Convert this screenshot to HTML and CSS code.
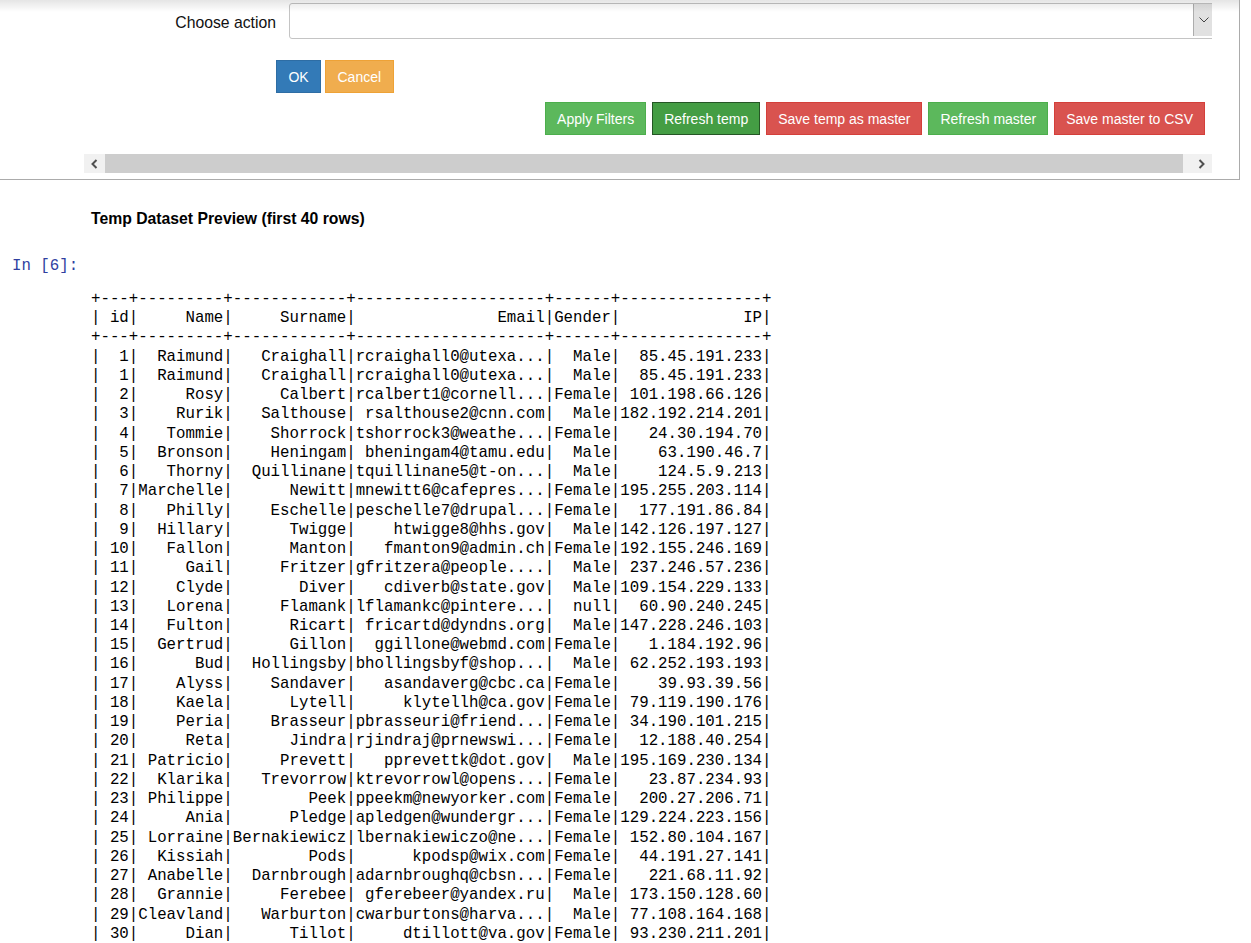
FILE: index.html
```html
<!DOCTYPE html>
<html>
<head>
<meta charset="utf-8">
<link rel="stylesheet" href="styles.css">
</head>
<body>
<div class="widget-box">
  <div class="top-shade"></div>
  <div class="clip">
    <div class="row-select">
      <label class="w-label">Choose action</label>
      <div class="select">
        <div class="select-arrow">
          <svg width="10" height="6" viewBox="0 0 10 6"><path d="M0.5 0.5 L5 5 L9.5 0.5" fill="none" stroke="#444" stroke-width="1"/></svg>
        </div>
      </div>
    </div>
    <div class="row-ok">
      <button class="btn btn-primary btn-ok">OK</button>
      <button class="btn btn-warning">Cancel</button>
    </div>
    <div class="row-actions">
      <button class="btn btn-success">Apply Filters</button>
      <button class="btn btn-success active">Refresh temp</button>
      <button class="btn btn-danger">Save temp as master</button>
      <button class="btn btn-success">Refresh master</button>
      <button class="btn btn-danger">Save master to CSV</button>
    </div>
    <div class="hscroll">
      <div class="hs-arrow hs-left">
        <svg width="7" height="10" viewBox="0 0 7 10"><path d="M5.5 1 L1.5 5 L5.5 9" fill="none" stroke="#505050" stroke-width="2"/></svg>
      </div>
      <div class="hs-thumb"></div>
      <div class="hs-track"></div>
      <div class="hs-arrow hs-right">
        <svg width="7" height="10" viewBox="0 0 7 10"><path d="M1.5 1 L5.5 5 L1.5 9" fill="none" stroke="#505050" stroke-width="2"/></svg>
      </div>
    </div>
  </div>
</div>

<h4 class="preview-title">Temp Dataset Preview (first 40 rows)</h4>

<div class="prompt">In [6]:</div>

<pre class="output">+---+---------+------------+--------------------+------+---------------+
| id|     Name|     Surname|               Email|Gender|             IP|
+---+---------+------------+--------------------+------+---------------+
|  1|  Raimund|   Craighall|rcraighall0@utexa...|  Male|  85.45.191.233|
|  1|  Raimund|   Craighall|rcraighall0@utexa...|  Male|  85.45.191.233|
|  2|     Rosy|     Calbert|rcalbert1@cornell...|Female| 101.198.66.126|
|  3|    Rurik|   Salthouse| rsalthouse2@cnn.com|  Male|182.192.214.201|
|  4|   Tommie|    Shorrock|tshorrock3@weathe...|Female|   24.30.194.70|
|  5|  Bronson|    Heningam| bheningam4@tamu.edu|  Male|    63.190.46.7|
|  6|   Thorny|  Quillinane|tquillinane5@t-on...|  Male|    124.5.9.213|
|  7|Marchelle|      Newitt|mnewitt6@cafepres...|Female|195.255.203.114|
|  8|   Philly|    Eschelle|peschelle7@drupal...|Female|  177.191.86.84|
|  9|  Hillary|      Twigge|    htwigge8@hhs.gov|  Male|142.126.197.127|
| 10|   Fallon|      Manton|   fmanton9@admin.ch|Female|192.155.246.169|
| 11|     Gail|     Fritzer|gfritzera@people....|  Male| 237.246.57.236|
| 12|    Clyde|       Diver|   cdiverb@state.gov|  Male|109.154.229.133|
| 13|   Lorena|     Flamank|lflamankc@pintere...|  null|  60.90.240.245|
| 14|   Fulton|      Ricart| fricartd@dyndns.org|  Male|147.228.246.103|
| 15|  Gertrud|      Gillon|  ggillone@webmd.com|Female|   1.184.192.96|
| 16|      Bud|  Hollingsby|bhollingsbyf@shop...|  Male| 62.252.193.193|
| 17|    Alyss|    Sandaver|   asandaverg@cbc.ca|Female|    39.93.39.56|
| 18|    Kaela|      Lytell|     klytellh@ca.gov|Female| 79.119.190.176|
| 19|    Peria|    Brasseur|pbrasseuri@friend...|Female| 34.190.101.215|
| 20|     Reta|      Jindra|rjindraj@prnewswi...|Female|  12.188.40.254|
| 21| Patricio|     Prevett|   pprevettk@dot.gov|  Male|195.169.230.134|
| 22|  Klarika|   Trevorrow|ktrevorrowl@opens...|Female|   23.87.234.93|
| 23| Philippe|        Peek|ppeekm@newyorker.com|Female|  200.27.206.71|
| 24|     Ania|      Pledge|apledgen@wundergr...|Female|129.224.223.156|
| 25| Lorraine|Bernakiewicz|lbernakiewiczo@ne...|Female| 152.80.104.167|
| 26|  Kissiah|        Pods|      kpodsp@wix.com|Female|  44.191.27.141|
| 27| Anabelle|  Darnbrough|adarnbroughq@cbsn...|Female|   221.68.11.92|
| 28|  Grannie|     Ferebee| gferebeer@yandex.ru|  Male| 173.150.128.60|
| 29|Cleavland|   Warburton|cwarburtons@harva...|  Male| 77.108.164.168|
| 30|     Dian|      Tillot|     dtillott@va.gov|Female| 93.230.211.201|
</pre>
</body>
</html>
```
FILE: styles.css
```css
html, body {
  margin: 0;
  padding: 0;
  background: #fff;
  font-family: "Liberation Sans", Arial, sans-serif;
  color: #000;
  overflow: hidden;
}

.widget-box {
  position: relative;
  width: 1239px;
  height: 179px;
  border-right: 1px solid #ababab;
  border-bottom: 1px solid #ababab;
}

.top-shade {
  position: absolute;
  left: 0;
  top: 0;
  width: 1239px;
  height: 12px;
  background: linear-gradient(to bottom, rgba(0,0,0,0.1), rgba(0,0,0,0));
  pointer-events: none;
  z-index: 2;
}

.clip {
  margin-left: 84px;
  width: 1128px;
  height: 173px;
  overflow: hidden;
  display: flex;
  flex-direction: column;
}

.row-select {
  display: flex;
  align-items: center;
  margin-top: 3px;
  height: 36px;
}

.w-label {
  width: 192px;
  flex: none;
  text-align: right;
  font-size: 15.75px;
  color: #111;
  margin-right: 13px;
  margin-top: 4px;
}

.select {
  flex: none;
  width: 926px;
  height: 34px;
  border: 1px solid #c4c4c4;
  border-radius: 3px;
  background: #fff;
  display: flex;
  justify-content: flex-end;
}

.select-arrow {
  width: 20px;
  height: 32px;
  background: #e1e1e1;
  border-left: 1px solid #adadad;
  display: flex;
  align-items: center;
  justify-content: center;
  margin-right: 2px;
}

.row-ok {
  display: flex;
  gap: 4px;
  margin-top: 21px;
  padding-left: 192px;
}

.row-actions {
  display: flex;
  justify-content: flex-end;
  gap: 6px;
  margin-top: 9px;
  padding-right: 7px;
}

.btn {
  height: 33px;
  padding: 0 11px;
  font-family: "Liberation Sans", Arial, sans-serif;
  font-size: 14px;
  color: #fff;
  border: 1px solid transparent;
  border-radius: 0;
  cursor: pointer;
  white-space: nowrap;
}

.btn-ok {
  width: 45px;
  padding: 0;
}

.btn-primary { background: #337ab7; border-color: #2e6da4; }
.btn-warning { background: #f0ad4e; border-color: #eea236; padding: 0 11.5px; }
.btn-success { background: #5cb85c; border-color: #4cae4c; }
.btn-success.active { background: #449d44; border-color: #255625; }
.btn-danger { background: #d9534f; border-color: #d43f3a; }

.hscroll {
  margin-top: auto;
  height: 19px;
  display: flex;
  background: #f1f1f1;
}

.hs-arrow {
  width: 21px;
  flex: none;
  display: flex;
  align-items: center;
  justify-content: center;
  background: #f1f1f1;
}

.hs-thumb {
  width: 1078px;
  flex: none;
  background: #cdcdcd;
}

.hs-track {
  flex: 1;
}

.preview-title {
  margin: 29px 0 0 91px;
  font-size: 15.75px;
  line-height: 20px;
  font-weight: bold;
}

.prompt {
  margin: 28px 0 0 12px;
  font-family: "Liberation Mono", "Courier New", monospace;
  font-size: 15.75px;
  line-height: 19px;
  color: #303f9f;
}

.output {
  margin: 14px 0 0 91px;
  font-family: "Liberation Mono", "Courier New", monospace;
  font-size: 15.75px;
  line-height: 19.23px;
  color: #000;
}
```
